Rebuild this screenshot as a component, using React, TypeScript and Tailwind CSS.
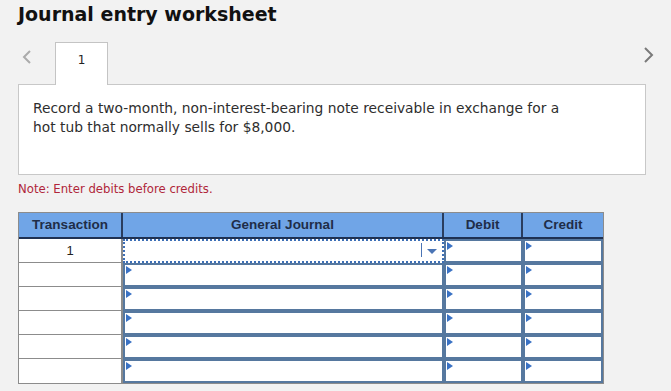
import React from "react";

const verdana = { fontFamily: '"DejaVu Sans", Verdana, sans-serif' };
const arial = { fontFamily: '"Liberation Sans", Arial, sans-serif' };

function Marker() {
  return (
    <span className="absolute left-[1px] top-[1px] w-0 h-0 border-y-[4px] border-y-transparent border-l-[6px] border-l-[#3a72c4]" />
  );
}

function InputCell({ focus }: { focus?: boolean }) {
  if (focus) {
    return (
      <div className="relative h-full bg-white border-2 border-dotted border-[#3d6fb6]">
        <span className="absolute right-[20px] top-[2px] bottom-[4px] w-px bg-[#4a74b5]" />
        <span className="absolute right-[5px] top-[8px] w-0 h-0 border-x-[5px] border-x-transparent border-t-[5px] border-t-[#4a74b5]" />
      </div>
    );
  }
  return (
    <div className="relative h-full bg-white border-2 border-[#56789f]">
      <Marker />
    </div>
  );
}

export default function App() {
  const rows = [0, 1, 2, 3, 4, 5];
  return (
    <div className="w-[671px] h-[391px] bg-[#f2f2f2] overflow-hidden text-[#1a1a1a]" style={verdana}>
      <h1 className="pl-[18px] pt-[1px] text-[19px] font-bold leading-[26px] text-[#111]">Journal entry worksheet</h1>

      <div className="relative flex items-end h-[43px] mt-[14px] pl-[55px]">
        <svg className="absolute left-[20px] top-[8px]" width="14" height="16" viewBox="0 0 14 16">
          <polyline points="10,2 4,8 10,14" fill="none" stroke="#ababab" strokeWidth="2" />
        </svg>
        <div className="w-[53px] h-[43px] bg-white border border-b-0 border-[#c4c4c4] flex justify-center pt-[8px] text-[12px] text-[#222] relative z-10 mb-[-1px]">
          1
        </div>
        <svg className="absolute left-[641px] top-[5px]" width="14" height="18" viewBox="0 0 14 18">
          <polyline points="4,2 11,9 4,16" fill="none" stroke="#7a7a7a" strokeWidth="2" />
        </svg>
      </div>

      <div className="ml-[18px] w-[628px] h-[91px] bg-white border border-[#c8c8c8] px-[14px] pt-[14px] text-[13.8px] leading-[19px] text-[#2e2e2e]">
        <p>Record a two-month, non-interest-bearing note receivable in exchange for a</p>
        <p>hot tub that normally sells for $8,000.</p>
      </div>

      <p className="ml-[18px] mt-[7px] text-[11.7px] leading-[14px] text-[#b0263a]">Note: Enter debits before credits.</p>

      <div className="ml-[18px] mt-[16px] w-[586px] border border-[#8c8c8c]" style={arial}>
        <div className="grid grid-cols-[104px_321px_79px_80px] h-[26px] bg-[#70a5e7] border-b-2 border-[#1f3152] text-[13.5px] font-bold text-[#1f2d48]">
          <div className="flex items-center justify-center border-r-2 border-[#2a3d5e]">Transaction</div>
          <div className="flex items-center justify-center border-r-2 border-[#2a3d5e]">General Journal</div>
          <div className="flex items-center justify-center border-r-2 border-[#2a3d5e]">Debit</div>
          <div className="flex items-center justify-center">Credit</div>
        </div>
        {rows.map((r) => (
          <div key={r} className="grid grid-cols-[104px_321px_79px_80px] h-[24px]">
            <div className={`flex items-center justify-center bg-white border-r-2 border-[#8c8c8c] text-[13px] text-[#222] ${r < 5 ? "border-b" : ""}`}>
              {r === 0 ? "1" : ""}
            </div>
            <InputCell focus={r === 0} />
            <InputCell />
            <InputCell />
          </div>
        ))}
      </div>
    </div>
  );
}
